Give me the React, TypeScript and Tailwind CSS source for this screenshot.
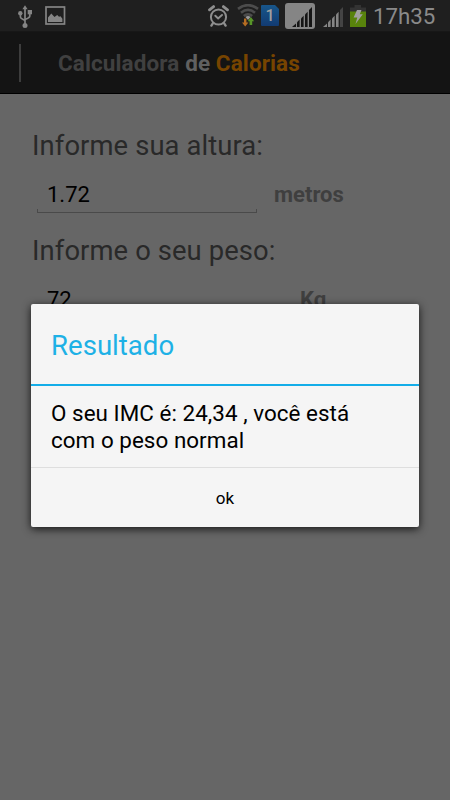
import { ReactNode } from "react";

const SignalBars = ({ className, color, last }: { className: string; color: string; last: string }) => (
  <svg className={className} viewBox="0 0 20 20">
    <path d="M0 20L4 16.4V20Z" fill={color} />
    <path d="M5 15.2L7.6 12.6V20H5Z" fill={color} />
    <path d="M9 11.4L11.6 8.8V20H9Z" fill={color} />
    <path d="M13 7.4L15.6 4.8V20H13Z" fill={color} />
    <path d="M17 3L20 0V20H17Z" fill={last} />
  </svg>
);

const UsbIcon = () => (
  <svg className="w-[14px] h-[24px]" viewBox="0 0 14 24" fill="#858585" stroke="#858585">
    <path d="M7 0.3L9.6 4.2H4.4Z" stroke="none" />
    <path d="M7 3V20M2.4 8V11.8Q2.4 13.6 7 15.4M11.8 7.5V11Q11.8 12.8 7 14.4" fill="none" strokeWidth="1.7" />
    <circle cx="7" cy="20.6" r="2.5" stroke="none" />
    <circle cx="2.3" cy="8.3" r="2.2" stroke="none" />
    <rect x="9.7" y="5" width="4.3" height="4.3" stroke="none" />
  </svg>
);

const PictureIcon = () => (
  <svg className="w-[21px] h-[19px]" viewBox="0 0 21 19">
    <rect x="1" y="1" width="18.5" height="17" fill="none" stroke="#858585" strokeWidth="1.7" />
    <path d="M3 16V11.5L6.3 7.6L9.5 11L12.2 9L14 10.8L15.5 10.3L17.4 12.8V16Z" fill="#858585" />
  </svg>
);

const AlarmIcon = () => (
  <svg className="w-[21px] h-[22px]" viewBox="0 0 21 22" fill="none" stroke="#8e8e8e" strokeWidth="2" strokeLinecap="round">
    <circle cx="10.5" cy="12" r="7.6" />
    <path d="M1.5 4.8L5.6 1.6M19.5 4.8L15.4 1.6" strokeWidth="2.8" />
    <path d="M5 18.2L3.4 20.6M16 18.2L17.6 20.6" strokeWidth="2.4" />
    <path d="M7.3 10.8L10.1 13.4L14 10" />
  </svg>
);

const WifiIcon = () => (
  <svg className="w-[22px] h-[23px]" viewBox="0 0 22 23" fill="none" strokeWidth="2.6">
    <path d="M1 4.9Q11-2.6 21 4.9" stroke="#4c4c4c" />
    <path d="M4 8.7Q11 3.2 18 8.7" stroke="#4c4c4c" />
    <path d="M6.8 12Q11 8.7 15.2 12" stroke="#4c4c4c" />
    <path d="M8.4 13Q11 11 13.6 13L11 16Z" fill="#9a9a9a" />
    <path d="M7 14.5H9.4V18.5H11.4L8.2 22.6L5 18.5H7Z" fill="#b56d22" />
    <path d="M12.6 21V17.2H10.7L13.9 13L17.1 17.2H15.2V21Z" fill="#579528" />
  </svg>
);

const BatteryIcon = () => (
  <svg className="w-[16px] h-[22px]" viewBox="0 0 16 22">
    <path d="M4.5 0H11V2.5H16V7H0V2.5H4.5Z" fill="#333333" />
    <rect y="6.5" width="16" height="15.5" fill="#58830c" />
    <path d="M7 5H11.5L9.8 9.3H12.8L5.5 19L7.3 12.6H3.6Z" fill="#a0a0a0" />
  </svg>
);

const StatusBar = () => (
  <div className="flex h-8 bg-[#1f1f1f] border-b border-[#171717]">
    <div className="pl-[18px] pt-[5px]"><UsbIcon /></div>
    <div className="pl-[13px] pt-[6px]"><PictureIcon /></div>
    <div className="ml-auto pt-[5px]"><AlarmIcon /></div>
    <div className="ml-[8px] pt-[4px]"><WifiIcon /></div>
    <div className="ml-[2px] mt-[5px] w-[18px] h-[21px] rounded-[1px] [clip-path:polygon(0_0,14px_0,100%_4px,100%_100%,0_100%)] bg-linear-to-b from-[#18568a] to-[#123b72] text-center text-[16px] leading-[21px] font-medium text-[#a0a0a0]">
      1
    </div>
    <div className="ml-[6px] mt-[3px] w-[30px] h-[26px] rounded-[3px] bg-[#858585] pl-[7px] pt-[4px]">
      <SignalBars className="w-[20px] h-[20px]" color="#151515" last="#151515" />
    </div>
    <div className="ml-[8px] pt-[7px]">
      <SignalBars className="w-[20px] h-[20px]" color="#858585" last="#444444" />
    </div>
    <div className="ml-[7px] pt-[5px]"><BatteryIcon /></div>
    <div className="ml-[7px] w-[77px] text-[22.3px] leading-[32px] text-[#8a8a8a]">17h35</div>
  </div>
);

const Header = () => (
  <div className="flex items-center h-[62px] bg-[#141414] border-b border-black pl-[19px]">
    <div className="w-[2px] h-[38px] bg-[#3d3d3d]" />
    <h1 className="pl-[37px] pt-[2px] text-[22.5px] tracking-[0.1px] font-bold text-[#404040] whitespace-nowrap">
      Calculadora <span className="text-[#606060]">de</span> <span className="text-[#774400]">Calorias</span>
    </h1>
  </div>
);

interface FieldProps {
  label: string;
  value: string;
  unit: ReactNode;
}

const Field = ({ label, value, unit }: FieldProps) => (
  <div className="h-[105px]">
    <p className="text-[27.4px] leading-8 tracking-[0.1px] text-[#292929] whitespace-nowrap">{label}</p>
    <div className="flex mt-[16px]">
      <div className="w-[220px] ml-[5px] h-[35px] relative">
        <p className="pl-[10px] text-[22px] leading-[33px] text-black">{value}</p>
        <div className="absolute bottom-0 left-0 w-full h-[4px] border border-t-0 border-[#4a4a4a]" />
      </div>
      <p className="ml-[17px] min-w-[70px] text-[22px] leading-[33px] font-bold text-[#3f3f3f]">{unit}</p>
    </div>
  </div>
);

const ResultDialog = () => (
  <div className="absolute left-[31px] top-[304px] w-[388px] h-[223px] rounded-[2px] bg-[#f5f5f5] shadow-[0_2px_8px_0_rgba(0,0,0,0.8)]">
    <h2 className="h-[80px] pl-5 text-[27.6px] leading-[84px] text-[#1eb1e6]">Resultado</h2>
    <div className="h-[2px] bg-[#14ade8]" />
    <p className="h-[81px] pt-[14px] pl-5 text-[22.4px] leading-[27px] tracking-[0.05px] text-black whitespace-nowrap">
      O seu IMC é: 24,34 , você está<br />
      com o peso normal
    </p>
    <button className="block w-full h-[60px] pt-[2px] border-t border-[#dedede] text-[17px] text-black">ok</button>
  </div>
);

export default function App() {
  return (
    <div className="relative w-[450px] h-[800px] overflow-hidden bg-[#666666] font-[Roboto,sans-serif]">
      <StatusBar />
      <Header />
      <div className="pl-8 pt-[36px]">
        <Field label="Informe sua altura:" value="1.72" unit="metros" />
        <Field label="Informe o seu peso:" value="72" unit={<span className="pl-[26px]">Kg</span>} />
      </div>
      <ResultDialog />
    </div>
  );
}
